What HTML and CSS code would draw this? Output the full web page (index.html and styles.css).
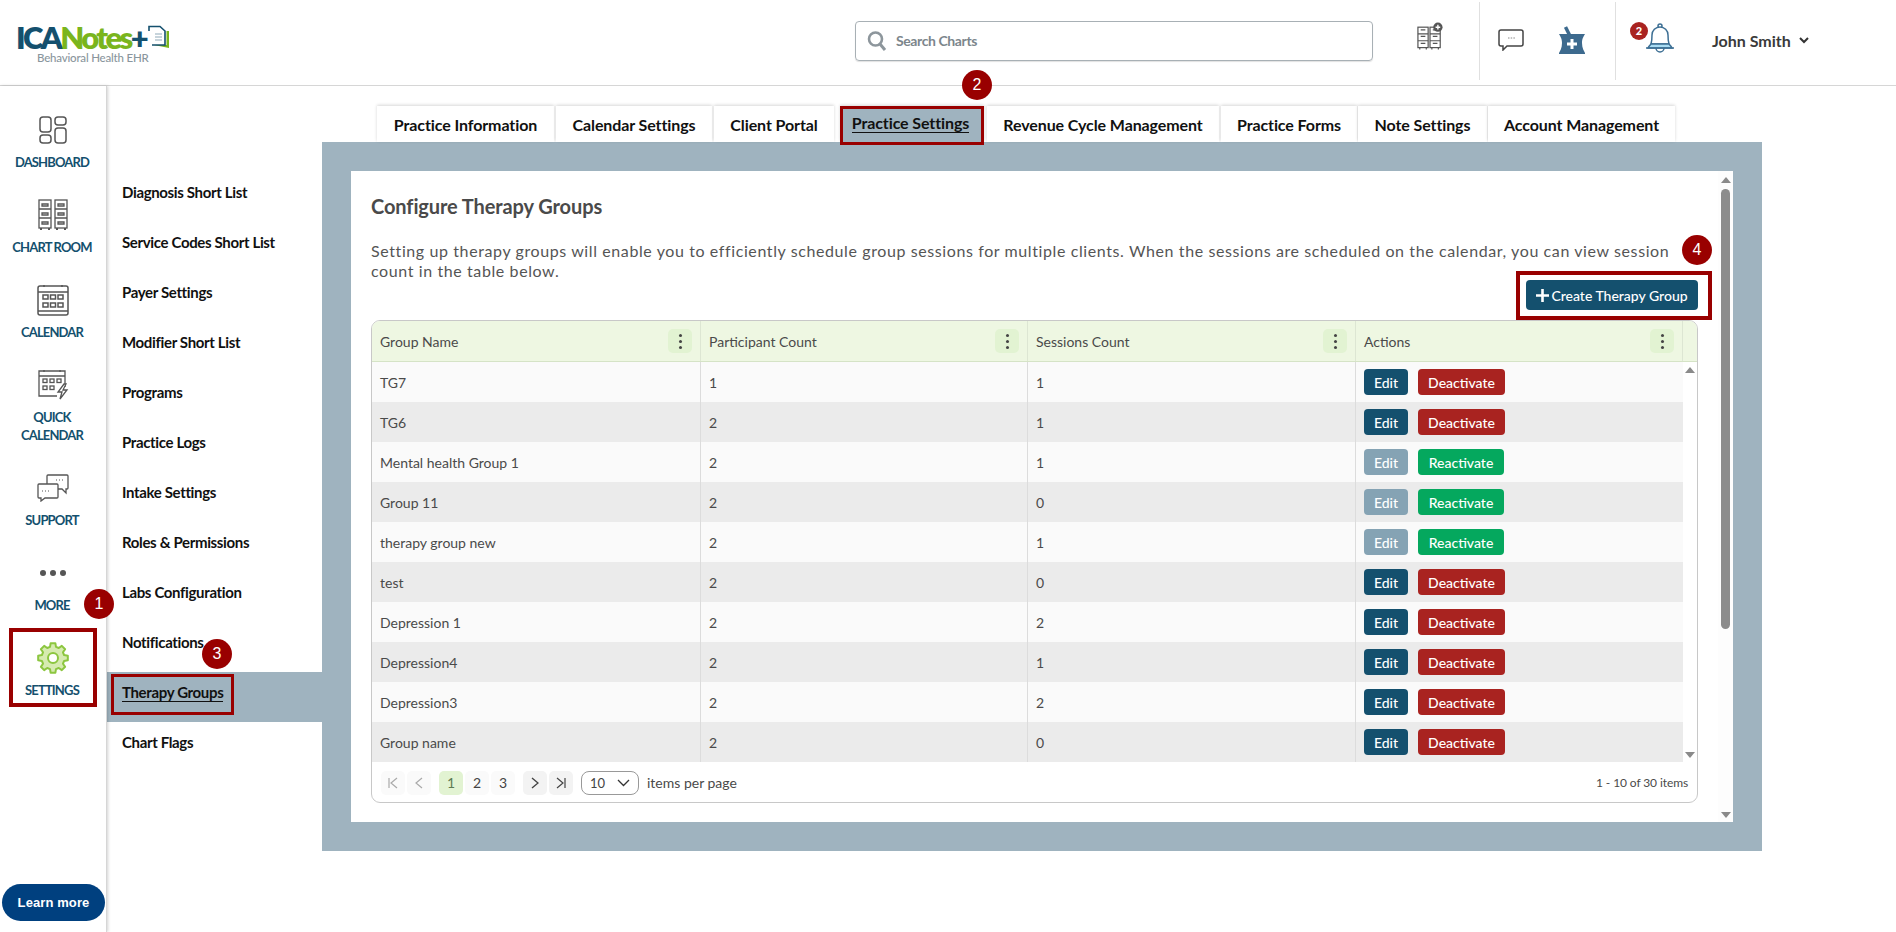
FILE: index.html
```html
<!DOCTYPE html>
<html lang="en">
<head>
<meta charset="utf-8">
<title>Configure Therapy Groups</title>
<link rel="stylesheet" href="styles.css">
</head>
<body>
<header class="topbar">
  <div class="logo">
    <div class="logo-main"><span class="logo-ica">ICA</span><span class="logo-notes">Notes</span><span class="logo-ica">+</span>
      <svg class="logo-doc" width="22" height="24" viewBox="0 0 22 24"><path d="M6 20 L21 23 L21 6 L18.500 6 L18.500 20 Z" fill="#7ab51d"/><path d="M1 6 V1.500 H12 L17 6 V20 H4" fill="#fff" stroke="#14506e" stroke-width="1.600"/><path d="M7 9h7M7 12h7M7 15h7" stroke="#8fa9b8" stroke-width="1"/></svg>
    </div>
    <div class="logo-sub">Behavioral Health EHR</div>
  </div>
  <div class="search">
    <svg width="20" height="22" viewBox="0 0 20 22"><circle cx="8.500" cy="9" r="6.500" fill="none" stroke="#8d969c" stroke-width="2.600"/><path d="M13 14l5 6" stroke="#8d969c" stroke-width="3"/></svg>
    <span>Search Charts</span>
  </div>
  <div class="top-icon">
    <svg width="26" height="28" viewBox="0 0 28 29" fill="none" stroke="#555" stroke-width="1.300"><rect x="1" y="5" width="11" height="22"/><rect x="14" y="5" width="11" height="22"/><path d="M1 12.300h11M1 19.600h11M14 12.300h11M14 19.600h11M4 8h5M4 15h5M4 22.500h5M17 8h5M17 15h5M17 22.500h5M3 27v2M10 27v2M16 27v2M23 27v2"/><circle cx="22.500" cy="5" r="5" fill="#555" stroke="none"/><path d="M20 5h5M22.500 2.500v5" stroke="#fff" stroke-width="1.500"/></svg>
  </div>
  <div class="top-group">
    <svg width="26" height="22" viewBox="0 0 26 22" fill="none"><path d="M3 1h20a2 2 0 0 1 2 2v12a2 2 0 0 1-2 2H9l-4 4v-4H3a2 2 0 0 1-2-2V3a2 2 0 0 1 2-2z" fill="#fff" stroke="#444" stroke-width="1.500"/><path d="M10 9h1.500M12.700 9h1.500M15.400 9h1.500" stroke="#888"/></svg>
    <svg width="26" height="28" viewBox="0 0 26 28"><path d="M6.500 1l4 8" stroke="#3d6a8e" stroke-width="3.500" fill="none"/><path d="M0 8h26c-1 2-3 4-3 9s2 8 3 10v1H0v-1c1-2 3-5 3-10S1 10 0 8z" fill="#3d6a8e"/><path d="M13 13v10M8 18h10" stroke="#fff" stroke-width="3"/></svg>
  </div>
  <div class="bell">
    <span class="bell-badge">2</span>
    <svg width="30" height="30" viewBox="0 0 30 30" fill="none" stroke="#3d6f94" stroke-width="1.500"><circle cx="15" cy="3" r="2"/><path d="M6 21c1-3 1-5 1-9a8 8 0 0 1 16 0c0 4 0 6 1 9z" fill="#fff"/><path d="M3 25c1-2 2-3 3-4h18c1 1 2 2 3 4z" fill="#a9dcf3"/><path d="M1 25h28"/><path d="M11 25a4 4 0 0 0 8 0"/></svg>
  </div>
  <div class="user">John Smith
    <svg width="10" height="7" viewBox="0 0 10 7" fill="none" stroke="#333" stroke-width="2"><path d="M1 1l4 4 4-4"/></svg>
  </div>
</header>

<div class="layout">
  <nav class="rail">
    <a class="rail-item">
      <span class="rail-icon"><svg width="28" height="28" viewBox="0 0 28 28" fill="none" stroke="#555" stroke-width="1.500"><rect x="1" y="1" width="11" height="15" rx="3"/><rect x="16" y="1" width="11" height="8" rx="3"/><rect x="1" y="19" width="11" height="8" rx="3"/><rect x="16" y="12" width="11" height="15" rx="3"/></svg></span>
      <span class="rail-label">DASHBOARD</span>
    </a>
    <a class="rail-item">
      <span class="rail-icon"><svg width="30" height="32" viewBox="0 0 30 32" fill="none" stroke="#555" stroke-width="1.300"><rect x="1" y="1" width="12" height="28"/><rect x="17" y="1" width="12" height="28"/><path d="M1 10h12M1 19h12M17 10h12M17 19h12M4 5h6v2H4zM4 14h6v2H4zM4 23h6v2H4zM20 5h6v2h-6zM20 14h6v2h-6zM20 23h6v2h-6z"/><path d="M3 29v2M11 29v2M19 29v2M27 29v2" stroke-width="2"/></svg></span>
      <span class="rail-label">CHART ROOM</span>
    </a>
    <a class="rail-item">
      <span class="rail-icon"><svg width="32" height="32" viewBox="0 0 32 32" fill="none" stroke="#555" stroke-width="1.500"><rect x="1" y="2" width="30" height="29" rx="2"/><path d="M1 8h30M1 27h30M7 1v2M25 1v2"/><rect x="6" y="11" width="5" height="4"/><rect x="13.500" y="11" width="5" height="4"/><rect x="21" y="11" width="5" height="4"/><rect x="6" y="19" width="5" height="4"/><rect x="13.500" y="19" width="5" height="4"/><rect x="21" y="19" width="5" height="4"/></svg></span>
      <span class="rail-label">CALENDAR</span>
    </a>
    <a class="rail-item">
      <span class="rail-icon"><svg width="32" height="32" viewBox="0 0 32 32" fill="none" stroke="#555" stroke-width="1.300"><path d="M28 18V2H2v25h18"/><path d="M2 7h26M7 1v2M23 1v2"/><rect x="6" y="10" width="4" height="3.500"/><rect x="13" y="10" width="4" height="3.500"/><rect x="20" y="10" width="4" height="3.500"/><rect x="6" y="17" width="4" height="3.500"/><rect x="13" y="17" width="4" height="3.500"/><path d="M27 15l-6 8h4l-2 7 7-9h-4l3-6z" fill="#fff"/></svg></span>
      <span class="rail-label">QUICK<br>CALENDAR</span>
    </a>
    <a class="rail-item">
      <span class="rail-icon"><svg width="32" height="28" viewBox="0 0 32 28" fill="none" stroke="#555" stroke-width="1.300"><path d="M10 10V2a1 1 0 0 1 1-1h19a1 1 0 0 1 1 1v12a1 1 0 0 1-1 1h-1v4l-4-4h-4"/><path d="M2 10h18a1 1 0 0 1 1 1v12a1 1 0 0 1-1 1H8l-4 3v-3H2a1 1 0 0 1-1-1V11a1 1 0 0 1 1-1z" fill="#fff"/><path d="M5 17h1M8 17h1M11 17h1M19 6h1M22 6h1M25 6h1" stroke-width="1"/></svg></span>
      <span class="rail-label">SUPPORT</span>
    </a>
    <a class="rail-item">
      <span class="rail-icon"><svg width="28" height="8" viewBox="0 0 28 8" fill="#555"><circle cx="4" cy="4" r="3"/><circle cx="14" cy="4" r="3"/><circle cx="24" cy="4" r="3"/></svg></span>
      <span class="rail-label">MORE</span>
    </a>
    <a class="rail-item">
      <span class="rail-icon"><svg width="32" height="32" viewBox="0 0 32 32"><path d="M13.020 4.890L13.650 1.180H18.350L18.980 4.890L21.750 6.040L24.820 3.860L28.140 7.180L25.960 10.250L27.110 13.020L30.820 13.650V18.350L27.110 18.980L25.960 21.750L28.140 24.820L24.820 28.140L21.750 25.960L18.980 27.110L18.350 30.820H13.650L13.020 27.110L10.250 25.960L7.180 28.140L3.860 24.820L6.040 21.750L4.890 18.980L1.180 18.350V13.650L4.890 13.020L6.040 10.250L3.860 7.180L7.180 3.860L10.250 6.040Z" fill="#d6ebb0" stroke="#8cc63f" stroke-width="2" stroke-linejoin="round"/><circle cx="16" cy="16" r="5" fill="#fff" stroke="#8cc63f" stroke-width="2"/></svg></span>
      <span class="rail-label">SETTINGS</span>
    </a>
    <a class="learn">Learn more</a>
  </nav>

  <nav class="subnav">
    <a class="sub-item">Diagnosis Short List</a>
    <a class="sub-item">Service Codes Short List</a>
    <a class="sub-item">Payer Settings</a>
    <a class="sub-item">Modifier Short List</a>
    <a class="sub-item">Programs</a>
    <a class="sub-item">Practice Logs</a>
    <a class="sub-item">Intake Settings</a>
    <a class="sub-item">Roles &amp; Permissions</a>
    <a class="sub-item">Labs Configuration</a>
    <a class="sub-item">Notifications</a>
    <a class="sub-item active"><span>Therapy Groups</span></a>
    <a class="sub-item">Chart Flags</a>
  </nav>

  <main class="main">
    <div class="tabs">
      <a class="tab t1">Practice Information</a>
      <a class="tab t2">Calendar Settings</a>
      <a class="tab t3">Client Portal</a>
      <a class="tab t4 active"><span>Practice Settings</span></a>
      <a class="tab t5">Revenue Cycle Management</a>
      <a class="tab t6">Practice Forms</a>
      <a class="tab t7">Note Settings</a>
      <a class="tab t8">Account Management</a>
    </div>
    <section class="panel">
      <div class="card">
        <div class="card-content">
          <h1 class="title">Configure Therapy Groups</h1>
          <p class="intro">Setting up therapy groups will enable you to efficiently schedule group sessions for multiple clients. When the sessions are scheduled on the calendar, you can view session count in the table below.</p>
          <div class="create-row">
            <button class="create"><svg width="13" height="13" viewBox="0 0 13 13"><path d="M6.500 0v13M0 6.500h13" stroke="#fff" stroke-width="2.600"/></svg>Create Therapy Group</button>
          </div>
          <div class="table">
            <div class="thead">
              <div class="th">Group Name<span class="kebab"><i></i><i></i><i></i></span></div>
              <div class="th">Participant Count<span class="kebab"><i></i><i></i><i></i></span></div>
              <div class="th">Sessions Count<span class="kebab"><i></i><i></i><i></i></span></div>
              <div class="th">Actions<span class="kebab"><i></i><i></i><i></i></span></div>
              <div class="th"></div>
            </div>
            <div class="tbody">
              <div class="rows">
                <div class="row"><div class="td">TG7</div><div class="td num">1</div><div class="td num">1</div><div class="td acts"><button class="btn edit">Edit</button><button class="btn deact">Deactivate</button></div></div>
                <div class="row"><div class="td">TG6</div><div class="td num">2</div><div class="td num">1</div><div class="td acts"><button class="btn edit">Edit</button><button class="btn deact">Deactivate</button></div></div>
                <div class="row"><div class="td">Mental health Group 1</div><div class="td num">2</div><div class="td num">1</div><div class="td acts"><button class="btn edit off">Edit</button><button class="btn react">Reactivate</button></div></div>
                <div class="row"><div class="td">Group 11</div><div class="td num">2</div><div class="td num">0</div><div class="td acts"><button class="btn edit off">Edit</button><button class="btn react">Reactivate</button></div></div>
                <div class="row"><div class="td">therapy group new</div><div class="td num">2</div><div class="td num">1</div><div class="td acts"><button class="btn edit off">Edit</button><button class="btn react">Reactivate</button></div></div>
                <div class="row"><div class="td">test</div><div class="td num">2</div><div class="td num">0</div><div class="td acts"><button class="btn edit">Edit</button><button class="btn deact">Deactivate</button></div></div>
                <div class="row"><div class="td">Depression 1</div><div class="td num">2</div><div class="td num">2</div><div class="td acts"><button class="btn edit">Edit</button><button class="btn deact">Deactivate</button></div></div>
                <div class="row"><div class="td">Depression4</div><div class="td num">2</div><div class="td num">1</div><div class="td acts"><button class="btn edit">Edit</button><button class="btn deact">Deactivate</button></div></div>
                <div class="row"><div class="td">Depression3</div><div class="td num">2</div><div class="td num">2</div><div class="td acts"><button class="btn edit">Edit</button><button class="btn deact">Deactivate</button></div></div>
                <div class="row"><div class="td">Group name</div><div class="td num">2</div><div class="td num">0</div><div class="td acts"><button class="btn edit">Edit</button><button class="btn deact">Deactivate</button></div></div>
              </div>
              <div class="inner-scroll"><span class="arrow up"></span><span class="arrow down"></span></div>
            </div>
            <div class="tfoot">
              <span class="pg dim"><svg width="12" height="12" viewBox="0 0 12 12" fill="none" stroke="#aaa" stroke-width="1.200"><path d="M2 1v10M10 1L4 6l6 5"/></svg></span>
              <span class="pg dim"><svg width="8" height="12" viewBox="0 0 8 12" fill="none" stroke="#aaa" stroke-width="1.200"><path d="M7 1L1 6l6 5"/></svg></span>
              <span class="pg cur gap-l">1</span>
              <span class="pg">2</span>
              <span class="pg">3</span>
              <span class="pg nav gap-l"><svg width="8" height="12" viewBox="0 0 8 12" fill="none" stroke="#444" stroke-width="1.400"><path d="M1 1l6 5-6 5"/></svg></span>
              <span class="pg nav"><svg width="12" height="12" viewBox="0 0 12 12" fill="none" stroke="#444" stroke-width="1.200"><path d="M2 1l6 5-6 5M10 1v10"/></svg></span>
              <span class="size">10<svg width="13" height="8" viewBox="0 0 13 8" fill="none" stroke="#333" stroke-width="1.300"><path d="M1 1l5.500 5.500L12 1"/></svg></span>
              <span class="per">items per page</span>
              <span class="count">1 - 10 of 30 items</span>
            </div>
          </div>
        </div>
        <div class="outer-scroll"><span class="arrow up"></span><span class="thumb"></span><span class="arrow down"></span></div>
      </div>
    </section>
  </main>
</div>

<div class="mark box-settings"></div>
<div class="mark box-therapy"></div>
<div class="mark box-tab"></div>
<div class="mark box-create"></div>
<div class="step s1">1</div>
<div class="step s2">2</div>
<div class="step s3">3</div>
<div class="step s4">4</div>
</body>
</html>
```

FILE: styles.css
```css
* { box-sizing: border-box; }
html, body { margin: 0; height: 932px; overflow: hidden; background: #fff; }
body { font-family: Lato, "Liberation Sans", sans-serif; color: #333; position: relative; }
a { color: inherit; text-decoration: none; }

/* top bar */
.topbar { height: 86px; border-bottom: 1px solid #d6d6d6; display: flex; align-items: center; position: relative; }
.logo { width: 855px; padding: 4px 0 0 16px; flex: none; }
.logo-main { display: flex; align-items: center; font-size: 31px; font-weight: 800; line-height: 26px; letter-spacing: -2.600px; height: 26px; }
.logo-ica { color: #14506e; }
.logo-notes { color: #7ab51d; }
.logo-doc { margin-left: 2px; }
.logo-sub { font-size: 11.500px; color: #8a969d; padding-left: 21px; margin-top: 1px; line-height: 14px; font-weight: 500; letter-spacing: -.2px; }
.search { width: 518px; height: 40px; margin-bottom: 4px; border: 1px solid #a8b0b5; border-radius: 4px; display: flex; align-items: center; gap: 9px; padding-left: 11px; font-size: 14px; font-weight: 700; color: #7c868c; letter-spacing: -.4px; box-shadow: 0 1px 1px rgba(0,0,0,.12); }
.top-icon { margin-left: 44px; margin-bottom: 12px; width: 62px; height: 29px; }
.top-group { width: 137px; height: 78px; margin-bottom: 4px; border-left: 1px solid #e0e0e0; border-right: 1px solid #e0e0e0; display: flex; align-items: center; gap: 35px; padding: 0 0 2px 18px; }
.bell { position: relative; margin-left: 29px; margin-bottom: 10px; height: 30px; width: 30px; }
.bell-badge { position: absolute; left: -15px; top: -1px; width: 18px; height: 18px; border-radius: 50%; background: #a92320; color: #fff; font-size: 11px; font-weight: 900; text-align: center; line-height: 18px; }
.user { margin-left: 37px; margin-bottom: 4px; font-size: 16px; font-weight: 700; color: #3a3a3a; display: flex; align-items: center; gap: 8px; }

.layout { display: flex; height: 846px; }

/* left rail */
.rail { width: 107px; flex: none; border-right: 1px solid #d6d6d6; box-shadow: 1px 0 3px rgba(0,0,0,.18); padding-top: 24px; display: flex; flex-direction: column; align-items: center; gap: 24px; position: relative; }
.rail-item { display: flex; flex-direction: column; align-items: center; width: 100%; }
.rail-icon { height: 40px; display: flex; align-items: center; justify-content: center; margin-bottom: 3px; }
.rail-label { font-size: 13px; line-height: 18px; font-weight: 700; color: #14506e; text-align: center; letter-spacing: -.85px; margin-left: -2px; }
.learn { position: absolute; left: 2px; top: 798px; width: 103px; height: 37px; border-radius: 19px; background: #00407f; color: #fff; font-family: "Liberation Sans", sans-serif; font-size: 13px; font-weight: 700; line-height: 37px; text-align: center; letter-spacing: .1px; }

/* sub nav */
.subnav { width: 215px; flex: none; padding-top: 86px; }
.sub-item { display: flex; align-items: center; height: 50px; padding: 0 0 10px 15px; font-size: 15px; font-weight: 700; color: #111; letter-spacing: -.35px; }
.sub-item.active { background: #9fb3bf; }
.sub-item.active span { border-bottom: 1px solid #111; line-height: 18px; }

/* main */
.main { width: 1440px; flex: none; padding-top: 20px; }
.tabs { display: flex; height: 36px; padding-left: 55px; }
.tab { height: 36px; display: flex; align-items: center; justify-content: center; background: #fff; font-size: 16px; font-weight: 700; color: #111; margin-right: 2px; box-shadow: 0 -1px 3px rgba(0,0,0,.16); letter-spacing: -.1px; }
.t1 { width: 177px; } .t2 { width: 156px; } .t3 { width: 120px; margin-right: 6px; }
.t4 { width: 144px; margin-right: 3px; padding-right: 3px; } .t5 { width: 232px; } .t6 { width: 136px; margin-right: 1px; }
.t7 { width: 129px; margin-right: 1px; } .t8 { width: 187px; }
.tab.active { background: #9fb3bf; }
.tab.active span { border-bottom: 1px solid #111; line-height: 19px; margin-top: -3px; }
.panel { height: 709px; background: #9fb3bf; padding: 29px; }
.card { height: 651px; background: #fff; display: flex; }
.card-content { flex: 1; min-width: 0; padding: 20px 20px 0; }
.title { margin: 0; font-size: 20px; line-height: 30px; font-weight: 700; color: #4a4a4a; letter-spacing: -.1px; }
.intro { margin: 20px 0 0; font-size: 16px; line-height: 20px; color: #555; letter-spacing: .6px; width: 1310px; }
.create-row { display: flex; justify-content: flex-end; margin-top: -1px; height: 40px; }
.create { height: 30px; width: 172px; background: #14506e; color: #fff; border: 0; border-radius: 4px; font: 500 14px Lato, sans-serif; display: flex; align-items: center; justify-content: center; gap: 2px; padding: 0; }

/* table */
.table { width: 1327px; height: 483px; border: 1px solid #c8c8c8; border-radius: 9px; overflow: hidden; display: flex; flex-direction: column; }
.thead { display: grid; grid-template-columns: 329px 327px 328px 327px 14px; height: 41px; background: #eef7e2; border-bottom: 1px solid #d5e3c6; flex: none; }
.th { font-size: 14px; color: #4a4a4a; border-right: 1px solid #dde6d3; display: flex; align-items: center; justify-content: space-between; padding: 0 8px; }
.th:last-child { border-right: 0; }
.kebab { width: 24px; height: 24px; border-radius: 5px; background: #e2f3d2; display: flex; flex-direction: column; align-items: center; justify-content: center; gap: 3px; }
.kebab i { width: 3px; height: 3px; border-radius: 50%; background: #444; }
.tbody { display: flex; height: 400px; flex: none; }
.rows { width: 1311px; flex: none; }
.row { display: grid; grid-template-columns: 329px 327px 328px 327px; height: 40px; background: #fafafa; }
.row:nth-child(even) { background: #ebebeb; }
.td { font-size: 14px; color: #4a4a4a; padding: 0 8px; display: flex; align-items: center; border-right: 1px solid #dcdcdc; }
.td.acts { border-right: 0; gap: 10px; }
.num { color: #4a4a4a; }
.btn { height: 26px; border: 0; border-radius: 4px; color: #fff; font: 500 14px Lato, sans-serif; padding: 0; }
.edit { width: 44px; background: #14506e; }
.edit.off { background: #85a3b4; }
.deact { width: 87px; background: #a92320; }
.react { width: 86px; background: #05a85e; }
.inner-scroll { flex: 1; display: flex; flex-direction: column; justify-content: space-between; align-items: center; padding: 5px 0 4px; background: #fff; }
.arrow { width: 0; height: 0; border-left: 5px solid transparent; border-right: 5px solid transparent; display: block; }
.arrow.up { border-bottom: 6px solid #8a8a8a; }
.arrow.down { border-top: 6px solid #8a8a8a; }
.tfoot { flex: 1; display: flex; align-items: center; padding: 1px 9px 0; gap: 2px; font-size: 14px; }
.pg { width: 24px; height: 24px; border-radius: 5px; background: #fafafa; display: flex; align-items: center; justify-content: center; color: #444; }
.pg.nav { background: #f3f3f3; }
.pg.cur { background: #e2f3d2; color: #5d7a52; }
.gap-l { margin-left: 6px; }
.size { width: 58px; height: 24px; margin-left: 6px; border: 1px solid #999; border-radius: 8px; display: flex; align-items: center; justify-content: space-between; padding: 0 8px; font-size: 13px; color: #444; }
.per { margin-left: 6px; color: #4a4a4a; font-size: 14px; }
.count { margin-left: auto; font-size: 12px; letter-spacing: -.1px; color: #4a4a4a; }

/* page scrollbar */
.outer-scroll { width: 15px; flex: none; background: #fdfdfd; display: flex; flex-direction: column; align-items: center; padding: 6px 0 4px; }
.thumb { width: 9px; height: 440px; margin-top: 6px; border-radius: 5px; background: #8c8c8c; margin-bottom: auto; }

/* annotations over the page */
.mark { position: absolute; border: 4px solid #990000; pointer-events: none; }
.box-settings { left: 9px; top: 628px; width: 88px; height: 79px; }
.box-therapy { left: 111px; top: 674px; width: 123px; height: 41px; border-width: 3px; }
.box-tab { left: 840px; top: 106px; width: 144px; height: 39px; border-width: 3px; }
.box-create { left: 1516px; top: 271px; width: 196px; height: 49px; }
.step { position: absolute; width: 30px; height: 30px; border-radius: 50%; background: #990000; color: #fff; font-size: 16px; line-height: 30px; text-align: center; font-family: "Liberation Sans", sans-serif; }
.s1 { left: 84px; top: 589px; }
.s2 { left: 962px; top: 70px; }
.s3 { left: 202px; top: 639px; }
.s4 { left: 1682px; top: 235px; }
```
